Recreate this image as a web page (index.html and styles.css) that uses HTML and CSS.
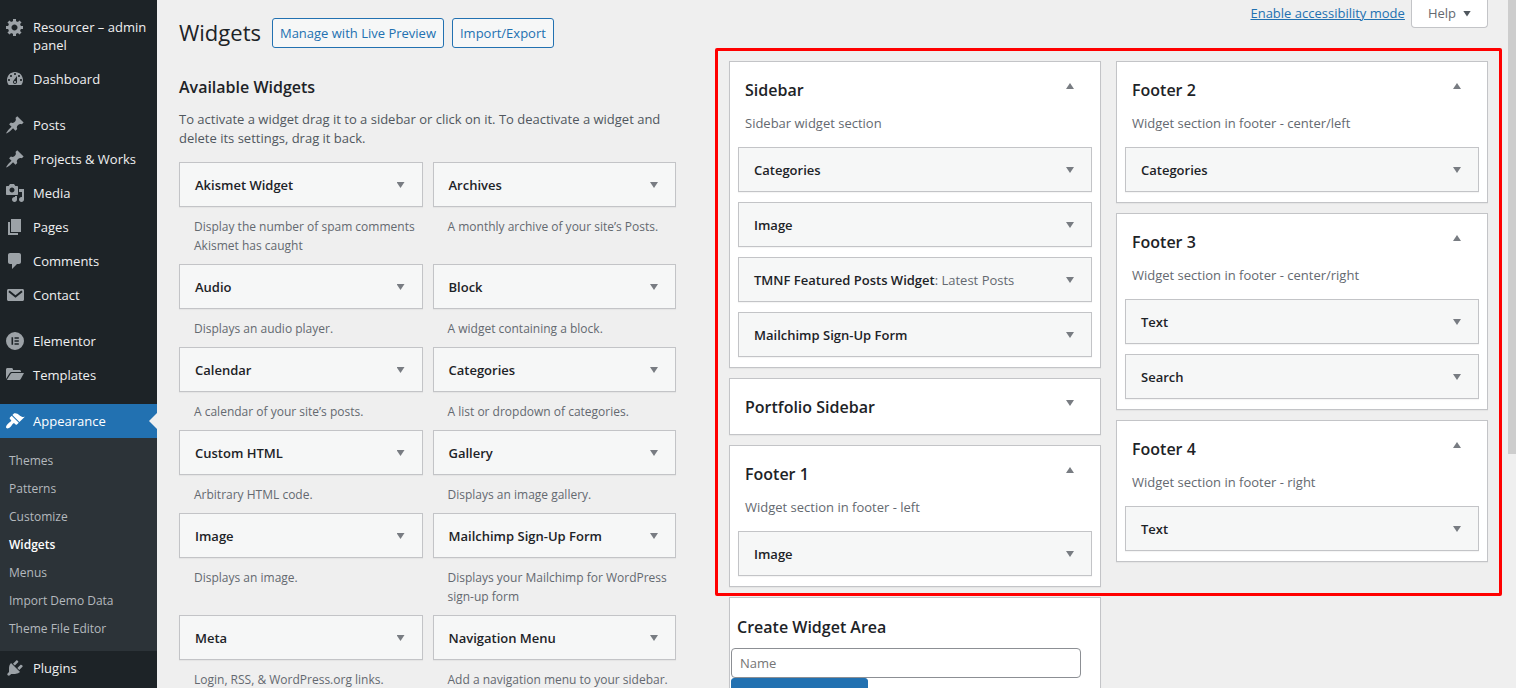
FILE: index.html
```html
<!DOCTYPE html>
<html lang="en">
<head>
<meta charset="utf-8">
<title>Widgets</title>
<link rel="stylesheet" href="styles.css">
</head>
<body>
<div class="admin">
  <nav class="menu" aria-label="Main menu">
    <ul class="menu-group">
      <li><a class="menu-link" href="#"><svg class="icon" viewBox="0 0 20 20"><path fill-rule="evenodd" d="M18 12h-2.18c-.17.7-.44 1.35-.81 1.93l1.54 1.54-2.1 2.1-1.54-1.54c-.58.36-1.23.63-1.91.79V19H8v-2.18c-.68-.16-1.33-.43-1.91-.79l-1.54 1.54-2.12-2.12 1.54-1.54c-.36-.58-.63-1.23-.79-1.91H1V9.03h2.17c.16-.7.44-1.35.8-1.94L2.43 5.55l2.1-2.1 1.54 1.54c.58-.37 1.24-.64 1.93-.81V2h3v2.18c.68.16 1.33.43 1.91.79l1.54-1.54 2.12 2.12-1.54 1.54c.36.59.64 1.24.8 1.94H18V12zm-8.5 1.5c1.66 0 3-1.34 3-3s-1.34-3-3-3-3 1.34-3 3 1.34 3 3 3z"/></svg><span>Resourcer – admin panel</span></a></li>
      <li><a class="menu-link" href="#"><svg class="icon" viewBox="0 0 20 20"><path fill-rule="evenodd" d="M3.76 16h12.48c1.1-1.37 1.76-3.11 1.76-5 0-4.42-3.58-8-8-8s-8 3.58-8 8c0 1.89.66 3.63 1.76 5zM10 4c.55 0 1 .45 1 1s-.45 1-1 1-1-.45-1-1 .45-1 1-1zM6 6c.55 0 1 .45 1 1s-.45 1-1 1-1-.45-1-1 .45-1 1-1zm8 0c.55 0 1 .45 1 1s-.45 1-1 1-1-.45-1-1 .45-1 1-1zm-5.37 5.55L12 7v6c0 1.1-.9 2-2 2s-2-.9-2-2c0-.57.24-1.08.63-1.45zM4 10c.55 0 1 .45 1 1s-.45 1-1 1-1-.45-1-1 .45-1 1-1zm12 0c.55 0 1 .45 1 1s-.45 1-1 1-1-.45-1-1 .45-1 1-1zm-5 3c0-.55-.45-1-1-1s-1 .45-1 1 .45 1 1 1 1-.45 1-1z"/></svg><span>Dashboard</span></a></li>
    </ul>
    <ul class="menu-group">
      <li><a class="menu-link" href="#"><svg class="icon" viewBox="0 0 20 20"><path d="M10.44 3.02l1.82-1.82 6.36 6.35-1.83 1.82c-1.05-.68-2.48-.57-3.41.36l-.75.75c-.92.93-1.04 2.35-.35 3.41l-1.83 1.82-2.41-2.41-2.8 2.79c-.42.42-3.38 2.71-3.8 2.29s1.86-3.39 2.28-3.81l2.79-2.79L4.1 9.36l1.83-1.82c1.05.69 2.48.57 3.4-.36l.75-.75c.93-.92 1.05-2.35.36-3.41z"/></svg><span>Posts</span></a></li>
      <li><a class="menu-link" href="#"><svg class="icon" viewBox="0 0 20 20"><path d="M10.44 3.02l1.82-1.82 6.36 6.35-1.83 1.82c-1.05-.68-2.48-.57-3.41.36l-.75.75c-.92.93-1.04 2.35-.35 3.41l-1.83 1.82-2.41-2.41-2.8 2.79c-.42.42-3.38 2.71-3.8 2.29s1.86-3.39 2.28-3.81l2.79-2.79L4.1 9.36l1.83-1.82c1.05.69 2.48.57 3.4-.36l.75-.75c.93-.92 1.05-2.35.36-3.41z"/></svg><span>Projects &amp; Works</span></a></li>
      <li><a class="menu-link" href="#"><svg class="icon" viewBox="0 0 20 20"><path fill-rule="evenodd" d="M13 11V4c0-.55-.45-1-1-1h-1.67L9 1H5L3.67 3H2c-.55 0-1 .45-1 1v7c0 .55.45 1 1 1h10c.55 0 1-.45 1-1zM7 4.5c1.38 0 2.5 1.12 2.5 2.5S8.38 9.5 7 9.5 4.5 8.38 4.5 7 5.62 4.5 7 4.5zM14 6h5v10.5c0 1.38-1.12 2.5-2.5 2.5S14 17.88 14 16.5s1.12-2.5 2.5-2.5c.17 0 .34.02.5.05V9h-3V6zm-4 8.05V13h2v3.5c0 1.38-1.12 2.5-2.5 2.5S7 17.88 7 16.5 8.12 14 9.5 14c.17 0 .34.02.5.05z"/></svg><span>Media</span></a></li>
      <li><a class="menu-link" href="#"><svg class="icon" viewBox="0 0 20 20"><path d="M6 15V2h10v13H6zm-1 1h8v2H3V5h2v11z"/></svg><span>Pages</span></a></li>
      <li><a class="menu-link" href="#"><svg class="icon" viewBox="0 0 20 20"><path d="M5 2h9c1.1 0 2 .9 2 2v7c0 1.1-.9 2-2 2h-2l-5 5v-5H5c-1.1 0-2-.9-2-2V4c0-1.1.9-2 2-2z"/></svg><span>Comments</span></a></li>
      <li><a class="menu-link" href="#"><svg class="icon" viewBox="0 0 20 20"><path d="M3.5 4h14c.8 0 1.5.7 1.5 1.500v9c0 .8-.7 1.500-1.500 1.500h-14c-.8 0-1.500-.7-1.500-1.500v-9C2 4.700 2.700 4 3.500 4z"/><path class="cut-line" d="M4 6.200l6.500 5.300L17 6.200"/></svg><span>Contact</span></a></li>
    </ul>
    <ul class="menu-group">
      <li><a class="menu-link" href="#"><svg class="icon" viewBox="0 0 20 20"><path fill-rule="evenodd" d="M10 1a9 9 0 1 1 0 18a9 9 0 0 1 0-18zM6.500 6.300v7.400h1.600V6.300zM9.500 6.300v1.500h4.300V6.300zM9.500 9.250v1.500h4.300v-1.500zM9.500 12.200v1.500h4.300v-1.500z"/></svg><span>Elementor</span></a></li>
      <li><a class="menu-link" href="#"><svg class="icon" viewBox="0 0 20 20"><path d="M1 14V4.500C1 3.600 1.600 3 2.500 3h4c.8 0 1.500.6 1.500 1.400V5h6.500c.8 0 1.500.7 1.500 1.500V7H7.200C6 7 5.200 7.400 4.600 8.300z"/><path d="M1.800 15L5.400 9.300C5.900 8.400 6.500 8 7.500 8H19l-3.100 5.800c-.5.900-1 1.200-2 1.200z"/></svg><span>Templates</span></a></li>
    </ul>
    <ul class="menu-group">
      <li>
        <a class="menu-link menu-link-current" href="#"><svg class="icon" viewBox="0 0 20 20"><path d="M14.48 11.06L7.41 3.99l1.5-1.5c.5-.56 2.3-.47 3.51.32 1.21.8 1.43 1.28 2.91 2.1 1.18.64 2.45 1.26 4.45.85zm-.71.71L6.7 4.7 4.93 6.47c-.39.39-.39 1.02 0 1.41l1.06 1.06c.39.39.39 1.03 0 1.42-.6.6-1.43 1.11-2.21 1.69-.35.26-.7.53-1.01.84C1.43 14.23.4 16.08 1.4 17.07c.99 1 2.84-.03 4.18-1.36.31-.31.58-.66.85-1.02.57-.78 1.08-1.61 1.69-2.21.39-.39 1.02-.39 1.41 0l1.06 1.06c.39.39 1.02.39 1.41 0z"/></svg><span>Appearance</span></a>
        <ul class="submenu">
          <li><a class="submenu-link" href="#">Themes</a></li>
          <li><a class="submenu-link" href="#">Patterns</a></li>
          <li><a class="submenu-link" href="#">Customize</a></li>
          <li><a class="submenu-link submenu-link-current" href="#">Widgets</a></li>
          <li><a class="submenu-link" href="#">Menus</a></li>
          <li><a class="submenu-link" href="#">Import Demo Data</a></li>
          <li><a class="submenu-link" href="#">Theme File Editor</a></li>
        </ul>
      </li>
      <li><a class="menu-link" href="#"><svg class="icon" viewBox="0 0 20 20"><path d="M13.11 4.36L9.87 7.6 8 5.73l3.24-3.24c.35-.34 1.05-.2 1.56.32.52.51.66 1.21.31 1.55zm-8 1.77l.91-1.12 9.01 9.01-1.19.84c-.71.71-2.63 1.16-3.82 1.16H6.14L4.9 17.26c-.59.59-1.54.59-2.12 0-.59-.58-.59-1.53 0-2.12l1.24-1.24v-3.88c0-1.13.4-3.19 1.09-3.89zm7.26 3.97l3.24-3.24c.34-.35 1.04-.21 1.55.31.52.51.66 1.21.31 1.55l-3.24 3.25z"/></svg><span>Plugins</span></a></li>
    </ul>
  </nav>

  <main class="content">
    <header class="page-head">
      <h1 class="page-title">Widgets</h1>
      <a class="action" href="#">Manage with Live Preview</a>
      <a class="action" href="#">Import/Export</a>
      <div class="screen-links">
        <a class="mode-link" href="#">Enable accessibility mode</a>
        <button class="help" type="button">Help <span class="arrow arrow-help"></span></button>
      </div>
    </header>

    <div class="columns">
      <section class="available">
        <h2 class="heading">Available Widgets</h2>
        <p class="intro">To activate a widget drag it to a sidebar or click on it. To deactivate a widget and delete its settings, drag it back.</p>
        <div class="widget-list">
          <div class="item"><button class="widget" type="button">Akismet Widget<span class="arrow"></span></button><p class="about">Display the number of spam comments Akismet has caught</p></div>
          <div class="item"><button class="widget" type="button">Archives<span class="arrow"></span></button><p class="about">A monthly archive of your site’s Posts.</p></div>
          <div class="item"><button class="widget" type="button">Audio<span class="arrow"></span></button><p class="about">Displays an audio player.</p></div>
          <div class="item"><button class="widget" type="button">Block<span class="arrow"></span></button><p class="about">A widget containing a block.</p></div>
          <div class="item"><button class="widget" type="button">Calendar<span class="arrow"></span></button><p class="about">A calendar of your site’s posts.</p></div>
          <div class="item"><button class="widget" type="button">Categories<span class="arrow"></span></button><p class="about">A list or dropdown of categories.</p></div>
          <div class="item"><button class="widget" type="button">Custom HTML<span class="arrow"></span></button><p class="about">Arbitrary HTML code.</p></div>
          <div class="item"><button class="widget" type="button">Gallery<span class="arrow"></span></button><p class="about">Displays an image gallery.</p></div>
          <div class="item"><button class="widget" type="button">Image<span class="arrow"></span></button><p class="about">Displays an image.</p></div>
          <div class="item"><button class="widget" type="button">Mailchimp Sign-Up Form<span class="arrow"></span></button><p class="about">Displays your Mailchimp for WordPress sign-up form</p></div>
          <div class="item"><button class="widget" type="button">Meta<span class="arrow"></span></button><p class="about">Login, RSS, &amp; WordPress.org links.</p></div>
          <div class="item"><button class="widget" type="button">Navigation Menu<span class="arrow"></span></button><p class="about">Add a navigation menu to your sidebar.</p></div>
        </div>
      </section>

      <div class="areas">
        <div class="area-grid">
          <div class="area-column">
            <section class="panel">
              <div class="panel-head"><h2 class="heading">Sidebar</h2><button class="toggle" type="button" aria-label="Toggle"><span class="arrow arrow-up"></span></button></div>
              <p class="panel-about">Sidebar widget section</p>
              <div class="placed">
                <button class="widget" type="button">Categories<span class="arrow"></span></button>
                <button class="widget" type="button">Image<span class="arrow"></span></button>
                <button class="widget" type="button"><span>TMNF Featured Posts Widget<span class="instance">: Latest Posts</span></span><span class="arrow"></span></button>
                <button class="widget" type="button">Mailchimp Sign-Up Form<span class="arrow"></span></button>
              </div>
            </section>
            <section class="panel">
              <div class="panel-head"><h2 class="heading">Portfolio Sidebar</h2><button class="toggle" type="button" aria-label="Toggle"><span class="arrow"></span></button></div>
            </section>
            <section class="panel">
              <div class="panel-head"><h2 class="heading">Footer 1</h2><button class="toggle" type="button" aria-label="Toggle"><span class="arrow arrow-up"></span></button></div>
              <p class="panel-about">Widget section in footer - left</p>
              <div class="placed">
                <button class="widget" type="button">Image<span class="arrow"></span></button>
              </div>
            </section>
          </div>
          <div class="area-column">
            <section class="panel">
              <div class="panel-head"><h2 class="heading">Footer 2</h2><button class="toggle" type="button" aria-label="Toggle"><span class="arrow arrow-up"></span></button></div>
              <p class="panel-about">Widget section in footer - center/left</p>
              <div class="placed">
                <button class="widget" type="button">Categories<span class="arrow"></span></button>
              </div>
            </section>
            <section class="panel">
              <div class="panel-head"><h2 class="heading">Footer 3</h2><button class="toggle" type="button" aria-label="Toggle"><span class="arrow arrow-up"></span></button></div>
              <p class="panel-about">Widget section in footer - center/right</p>
              <div class="placed">
                <button class="widget" type="button">Text<span class="arrow"></span></button>
                <button class="widget" type="button">Search<span class="arrow"></span></button>
              </div>
            </section>
            <section class="panel">
              <div class="panel-head"><h2 class="heading">Footer 4</h2><button class="toggle" type="button" aria-label="Toggle"><span class="arrow arrow-up"></span></button></div>
              <p class="panel-about">Widget section in footer - right</p>
              <div class="placed">
                <button class="widget" type="button">Text<span class="arrow"></span></button>
              </div>
            </section>
          </div>
          <div class="highlight"></div>
        </div>
        <div class="area-grid">
          <form class="panel create">
            <h2 class="heading create-title">Create Widget Area</h2>
            <input class="name" type="text" placeholder="Name" aria-label="Name">
            <button class="submit" type="button" aria-label="Create Widget Area"></button>
          </form>
        </div>
      </div>
    </div>
  </main>
  <div class="scroll-thumb"></div>
</div>
</body>
</html>
```

FILE: styles.css
```css
* {
  box-sizing: border-box;
}

body {
  margin: 0;
  background: #f0f0f1;
  color: #1d2327;
  font: 13px/19px "Segoe UI", "Open Sans", "Noto Sans", sans-serif;
}

h1,
h2,
p,
ul {
  margin: 0;
  padding: 0;
}

ul {
  list-style: none;
}

button,
input {
  font: inherit;
}

.admin {
  position: relative;
  display: flex;
  height: 100vh;
  overflow: hidden;
  background: #efefef;
}

/* Main menu */
.menu {
  display: flex;
  flex-direction: column;
  flex: none;
  gap: 12px;
  width: 157px;
  padding-top: 10px;
  background: #1d2327;
}

.menu-link {
  position: relative;
  display: flex;
  gap: 8px;
  padding: 8px 8px 8px 5px;
  color: #f0f0f1;
  font-size: 13px;
  line-height: 18px;
  text-decoration: none;
}

.icon {
  flex: none;
  width: 20px;
  height: 20px;
  margin: -1px 0;
  fill: #9ca2a7;
}

.cut-line {
  fill: none;
  stroke: #1d2327;
  stroke-width: 2;
}

.menu-link-current {
  background: #2271b1;
  color: #fff;
}

.menu-link-current .icon {
  fill: #fff;
}

.menu-link-current::after {
  content: "";
  position: absolute;
  top: 9px;
  right: 0;
  border: 8px solid transparent;
  border-left-width: 0;
  border-right-color: #efefef;
}

.submenu {
  padding: 9px 0 8px;
  background: #2c3338;
}

.submenu-link {
  display: block;
  padding: 5px 9px;
  color: #b4b9be;
  font-size: 12px;
  line-height: 18px;
  text-decoration: none;
}

.submenu-link-current {
  color: #fff;
  font-weight: 600;
}

/* Page header */
.content {
  flex: 1;
  min-width: 0;
  padding: 0 28px 0 22px;
}

.page-head {
  display: flex;
  align-items: flex-start;
  gap: 8px;
  height: 61px;
}

.page-title {
  padding: 16px 3px 0 0;
  font-size: 22px;
  font-weight: 400;
  line-height: 32px;
}

.action {
  margin-top: 18px;
  padding: 5px 7px;
  border: 1px solid #2271b1;
  border-radius: 3px;
  background: #f6f7f7;
  color: #2271b1;
  line-height: 18px;
  text-decoration: none;
}

.screen-links {
  display: flex;
  gap: 6px;
  margin-left: auto;
}

.mode-link {
  padding-top: 4px;
  color: #2271b1;
}

.help {
  display: flex;
  align-items: center;
  gap: 7px;
  height: 28px;
  padding: 0 16px;
  border: 1px solid #c3c4c7;
  border-top: 0;
  border-radius: 0 0 4px 4px;
  background: #fff;
  color: #646970;
}

.arrow {
  flex: none;
  width: 8px;
  height: 6px;
  background: #787c82;
  clip-path: polygon(0 0, 100% 0, 50% 100%);
}

.arrow-up {
  clip-path: polygon(50% 0, 100% 100%, 0 100%);
}

.arrow-help {
  background: #50575e;
}

/* Available widgets */
.columns {
  display: grid;
  grid-template-columns: 497fr 759fr;
  gap: 53px;
  align-items: start;
}

.available {
  padding-top: 14px;
}

.heading {
  font-size: 16px;
  font-weight: 600;
  line-height: 24px;
}

.intro {
  margin: 11px 0 14px;
  color: #50575e;
}

.widget-list {
  display: grid;
  grid-template-columns: 1fr 1fr;
  gap: 9px 10px;
}

.widget {
  display: flex;
  align-items: center;
  justify-content: space-between;
  width: 100%;
  height: 45px;
  padding: 1px 17px 0 15px;
  border: 1px solid #c3c4c7;
  background: #f6f7f7;
  box-shadow: 0 1px 1px rgba(0, 0, 0, 0.04);
  color: #1d2327;
  font-weight: 600;
  text-align: left;
}

.instance {
  color: #646970;
  font-weight: 400;
}

.about {
  padding: 10px 0 0 15px;
  color: #646970;
  font-size: 12px;
}

/* Widget areas */
.areas {
  display: grid;
  gap: 10px;
}

.area-grid {
  position: relative;
  display: grid;
  grid-template-columns: 1fr 1fr;
  gap: 15px;
  align-items: start;
}

.area-column {
  display: grid;
  gap: 10px;
}

.panel {
  border: 1px solid #c3c4c7;
  background: #fff;
  box-shadow: 0 1px 1px rgba(0, 0, 0, 0.04);
}

.panel-head {
  display: flex;
  align-items: flex-start;
  justify-content: space-between;
  height: 55px;
  padding: 16px 21px 0 15px;
}

.toggle {
  display: flex;
  margin: 0;
  padding: 5px;
  border: 0;
  background: none;
}

.panel-about {
  margin-top: -3px;
  padding: 0 15px 14px;
  color: #646970;
}

.placed {
  display: grid;
  gap: 10px;
  padding: 0 8px 10px;
}

.highlight {
  position: absolute;
  inset: -13px -14px -9px;
  border: 3px solid #f00;
  border-radius: 2px;
  pointer-events: none;
}

.create {
  padding: 17px 1px 0;
}

.create-title {
  padding: 0 6px 9px;
}

.name {
  display: block;
  width: 95%;
  height: 30px;
  padding: 0 8px;
  border: 1px solid #8c8f94;
  border-radius: 4px;
  background: #fff;
  color: #2c3338;
}

.name::placeholder {
  color: #757575;
}

.submit {
  display: block;
  width: 137px;
  height: 30px;
  border: 1px solid #2271b1;
  border-radius: 3px;
  background: #2271b1;
}

.scroll-thumb {
  position: absolute;
  top: 0;
  right: 0;
  width: 8px;
  height: 66%;
  background: #cdcdcd;
}
```
